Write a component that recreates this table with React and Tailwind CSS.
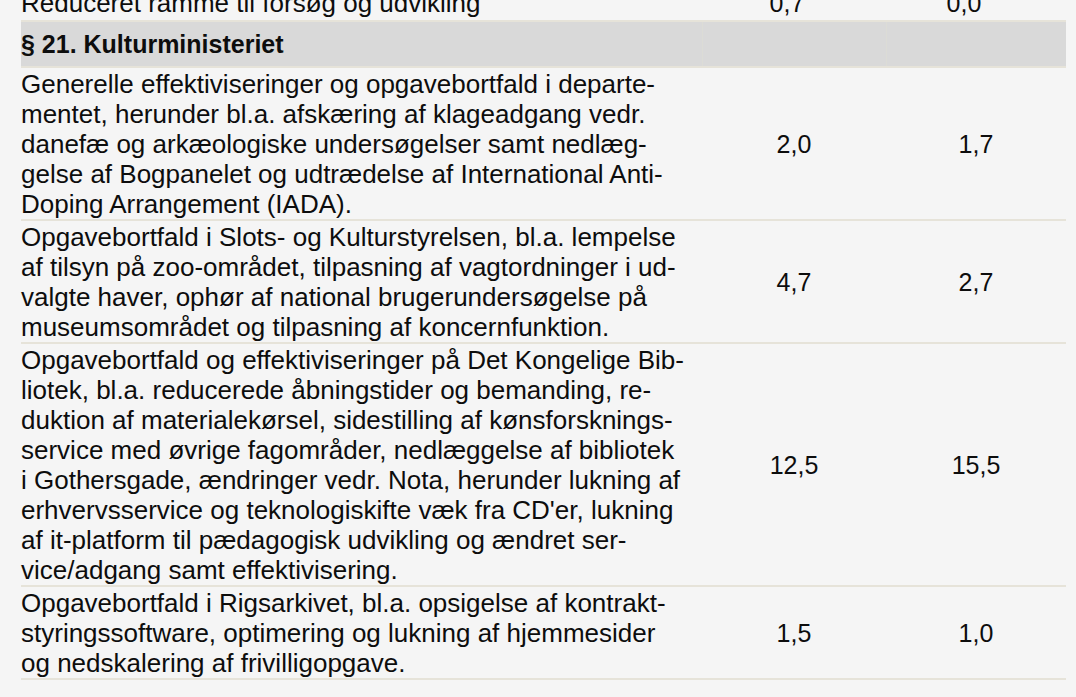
import React from "react";

const rows = [
  {
    lines: [
      "Generelle effektiviseringer og opgavebortfald i departe-",
      "mentet, herunder bl.a. afskæring af klageadgang vedr.",
      "danefæ og arkæologiske undersøgelser samt nedlæg-",
      "gelse af Bogpanelet og udtrædelse af International Anti-",
      "Doping Arrangement (IADA).",
    ],
    a: "2,0",
    b: "1,7",
  },
  {
    lines: [
      "Opgavebortfald i Slots- og Kulturstyrelsen, bl.a. lempelse",
      "af tilsyn på zoo-området, tilpasning af vagtordninger i ud-",
      "valgte haver, ophør af national brugerundersøgelse på",
      "museumsområdet og tilpasning af koncernfunktion.",
    ],
    a: "4,7",
    b: "2,7",
  },
  {
    lines: [
      "Opgavebortfald og effektiviseringer på Det Kongelige Bib-",
      "liotek, bl.a. reducerede åbningstider og bemanding, re-",
      "duktion af materialekørsel, sidestilling af kønsforsknings-",
      "service med øvrige fagområder, nedlæggelse af bibliotek",
      "i Gothersgade, ændringer vedr. Nota, herunder lukning af",
      "erhvervsservice og teknologiskifte væk fra CD'er, lukning",
      "af it-platform til pædagogisk udvikling og ændret ser-",
      "vice/adgang samt effektivisering.",
    ],
    a: "12,5",
    b: "15,5",
  },
  {
    lines: [
      "Opgavebortfald i Rigsarkivet, bl.a. opsigelse af kontrakt-",
      "styringssoftware, optimering og lukning af hjemmesider",
      "og nedskalering af frivilligopgave.",
    ],
    a: "1,5",
    b: "1,0",
  },
];

function Row({ lines, a, b }) {
  return (
    <div className="grid grid-cols-[681px_184px_180px] pt-[1px] border-b-2 border-[#e6e3d9]">
      <div className="flex flex-col text-[26px]">
        {lines.map((l, i) => (
          <div key={i} className="whitespace-nowrap">
            {l}
          </div>
        ))}
      </div>
      <div className="flex items-center justify-center">{a}</div>
      <div className="flex items-center justify-center">{b}</div>
    </div>
  );
}

export default function App() {
  return (
    <div
      className="w-[1076px] h-[697px] overflow-hidden bg-[#f5f5f5] text-[#0d0d0d] text-[25px] leading-[30px]"
      style={{ fontFamily: '"Liberation Sans", Arial, sans-serif' }}
    >
      <div className="ml-[21px] w-[1045px] -mt-[12px]">
        <div className="grid grid-cols-[681px_184px_180px] pb-[2px] border-b-2 border-[#e6e3d9]">
          <div className="whitespace-nowrap text-[26px]">Reduceret ramme til forsøg og udvikling</div>
          <div className="flex items-center justify-center pr-[14px]">0,7</div>
          <div className="flex items-center justify-center pr-[24px]">0,0</div>
        </div>
        <div className="grid grid-cols-[681px_184px_180px] h-[46px] bg-[#d9d9d9] border-b-2 border-[#e6e3d9]">
          <div className="flex items-center font-bold whitespace-nowrap">§ 21. Kulturministeriet</div>
          <div className="border-l border-[#dcdcd6]"></div>
          <div className="border-l border-[#dcdcd6]"></div>
        </div>
        {rows.map((r, i) => (
          <Row key={i} {...r} />
        ))}
      </div>
    </div>
  );
}
